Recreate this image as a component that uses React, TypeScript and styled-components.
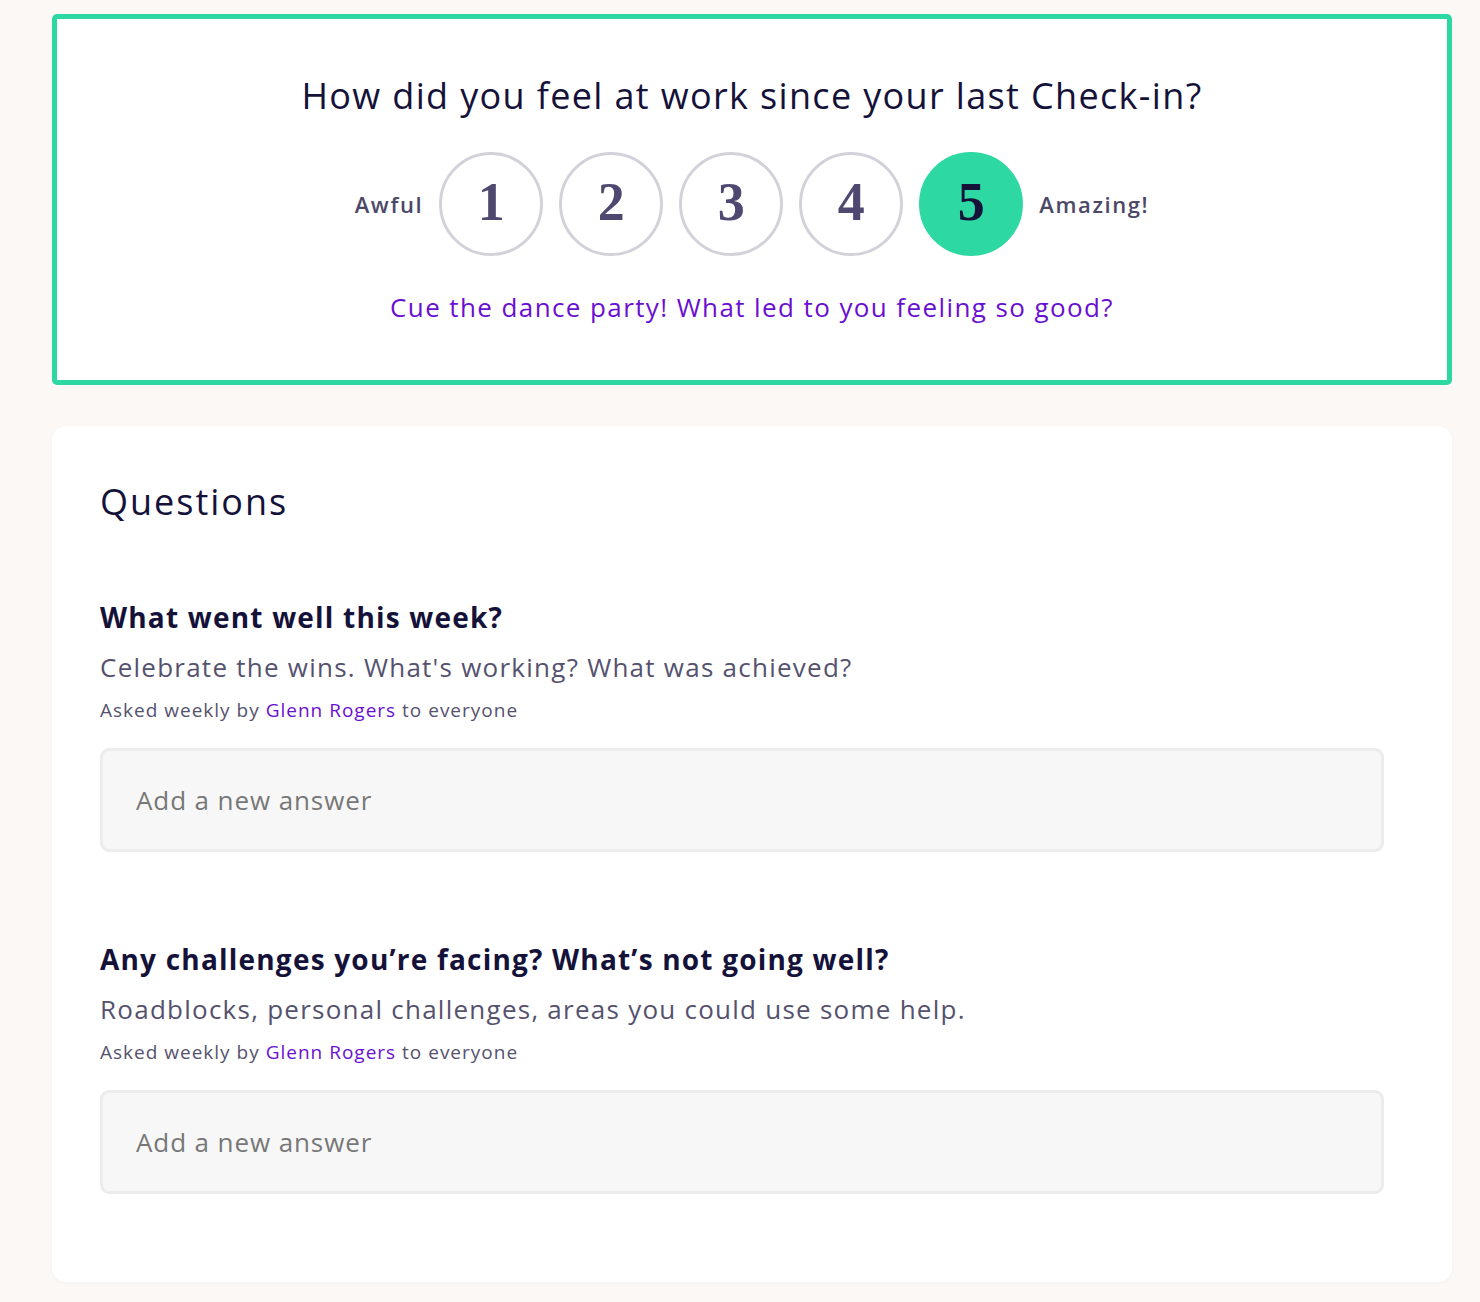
import { createGlobalStyle } from 'styled-components';
import styled from 'styled-components';

const GlobalStyle = createGlobalStyle`
  html, body {
    margin: 0;
    padding: 0;
    background: #fcf8f6;
  }
  body {
    font-family: "Open Sans", Lato, sans-serif;
    color: #15123a;
  }
`;

const Page = styled.div`
  padding: 14px 28px 20px 52px;
  display: flex;
  flex-direction: column;
  gap: 41px;
`;

// ---------------------------------------------
// mood check-in
// ---------------------------------------------
const MoodCard = styled.section`
  background: #ffffff;
  border: 5px solid #2ed8a3;
  border-radius: 5px;
  padding: 55px 0 56px;
  display: flex;
  flex-direction: column;
  align-items: center;
`;

const MoodTitle = styled.h1`
  margin: 0;
  font-size: 36px;
  line-height: 44px;
  font-weight: 400;
  letter-spacing: 1.35px;
  color: #15123a;
`;

const ScaleRow = styled.div`
  margin-top: 34px;
  display: flex;
  align-items: center;
  gap: 16px;
`;

const ScaleLabel = styled.span`
  font-size: 22px;
  font-weight: 600;
  letter-spacing: 1.6px;
  color: #4c4868;
`;

const ScoreButton = styled.button<{ $selected?: boolean }>`
  width: 104px;
  height: 104px;
  border-radius: 50%;
  box-sizing: border-box;
  border: 3px solid ${(p) => (p.$selected ? '#2ed8a3' : '#d3d2da')};
  background: ${(p) => (p.$selected ? '#2ed8a3' : '#ffffff')};
  color: ${(p) => (p.$selected ? '#15123a' : '#4f4870')};
  font-family: "Liberation Serif", "DejaVu Serif", serif;
  font-weight: 700;
  font-size: 54px;
  line-height: 1;
  display: flex;
  align-items: center;
  justify-content: center;
  padding: 0 0 4px;
  cursor: pointer;
`;

const MoodPrompt = styled.p`
  margin: 34px 0 0;
  font-size: 26px;
  line-height: 34px;
  letter-spacing: 1.4px;
  color: #6a0fd1;
`;

// ---------------------------------------------
// questions
// ---------------------------------------------
const QuestionsCard = styled.section`
  background: #ffffff;
  border-radius: 14px;
  padding: 54px 68px 88px 48px;
  box-shadow: 0 1px 4px rgba(60, 40, 30, 0.04);
`;

const SectionTitle = styled.h2`
  margin: 0;
  font-size: 36px;
  line-height: 44px;
  font-weight: 400;
  letter-spacing: 2px;
  color: #15123a;
`;

const Question = styled.div<{ $gap: number }>`
  margin-top: ${(p) => p.$gap}px;
  display: flex;
  flex-direction: column;
`;

const QuestionTitle = styled.h3`
  margin: 0;
  font-size: 28px;
  line-height: 36px;
  font-weight: 700;
  letter-spacing: 1.2px;
  color: #15123a;
`;

const QuestionHint = styled.p`
  margin: 15px 0 0;
  font-size: 26px;
  line-height: 34px;
  letter-spacing: 1.25px;
  color: #55526e;
`;

const AskedBy = styled.p`
  margin: 13px 0 0;
  font-size: 19px;
  line-height: 26px;
  letter-spacing: 1px;
  color: #55526e;

  a {
    color: #6a0fd1;
    text-decoration: none;
  }
`;

const AnswerInput = styled.input`
  margin-top: 25px;
  box-sizing: border-box;
  width: 100%;
  height: 104px;
  border: 3px solid #ececec;
  border-radius: 9px;
  background: #f7f7f7;
  padding: 0 33px;
  font-family: inherit;
  font-size: 26px;
  letter-spacing: 0.9px;
  color: #15123a;
  outline: none;

  &::placeholder {
    color: #777777;
  }
`;

const questions = [
  {
    title: 'What went well this week?',
    hint: "Celebrate the wins. What's working? What was achieved?",
    gap: 75,
  },
  {
    title: 'Any challenges you’re facing? What’s not going well?',
    hint: 'Roadblocks, personal challenges, areas you could use some help.',
    gap: 89,
  },
];

export default function App() {
  const selected = 5;

  return (
    <>
      <GlobalStyle />
      <Page>
        <MoodCard>
          <MoodTitle>How did you feel at work since your last Check-in?</MoodTitle>
          <ScaleRow>
            <ScaleLabel>Awful</ScaleLabel>
            {[1, 2, 3, 4, 5].map((n) => (
              <ScoreButton key={n} $selected={n === selected}>
                {n}
              </ScoreButton>
            ))}
            <ScaleLabel>Amazing!</ScaleLabel>
          </ScaleRow>
          <MoodPrompt>Cue the dance party! What led to you feeling so good?</MoodPrompt>
        </MoodCard>

        <QuestionsCard>
          <SectionTitle>Questions</SectionTitle>
          {questions.map((q) => (
            <Question key={q.title} $gap={q.gap}>
              <QuestionTitle>{q.title}</QuestionTitle>
              <QuestionHint>{q.hint}</QuestionHint>
              <AskedBy>
                Asked weekly by <a href="#">Glenn Rogers</a> to everyone
              </AskedBy>
              <AnswerInput placeholder="Add a new answer" />
            </Question>
          ))}
        </QuestionsCard>
      </Page>
    </>
  );
}
